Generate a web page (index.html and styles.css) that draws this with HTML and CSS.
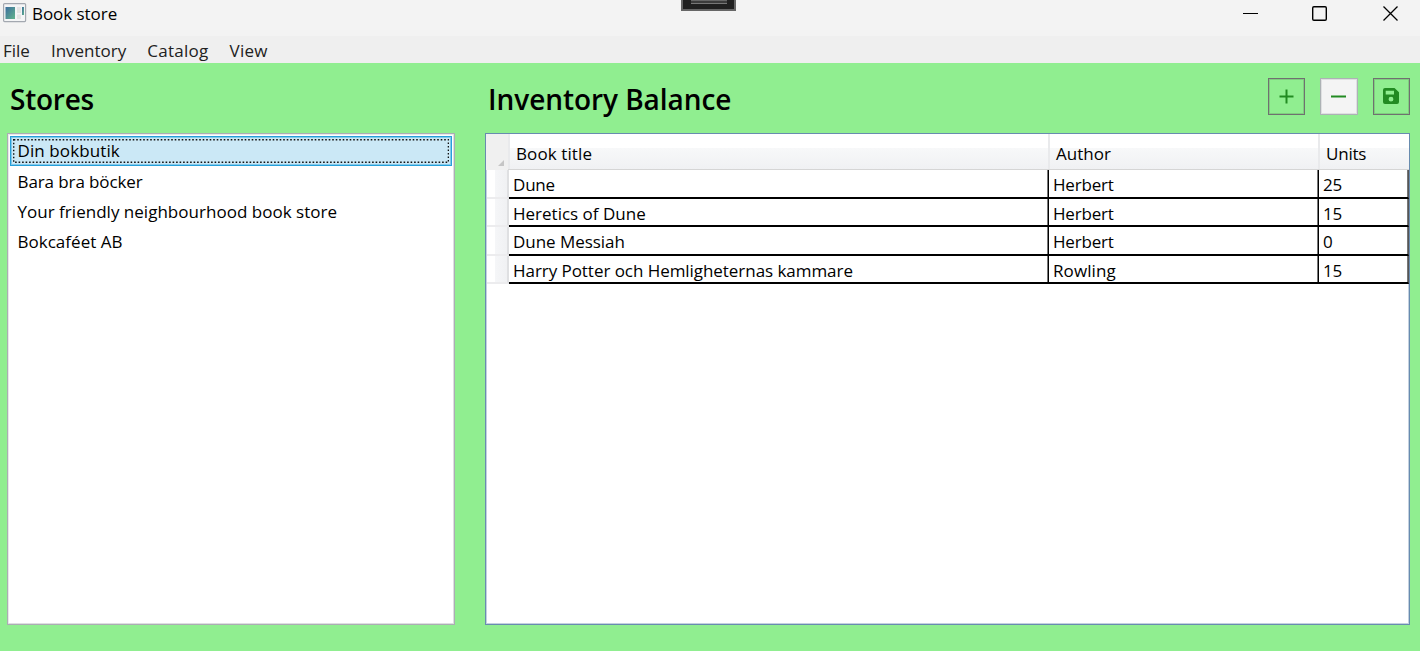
FILE: index.html
```html
<!DOCTYPE html>
<html lang="en">
<head>
<meta charset="utf-8">
<title>Book store</title>
<link rel="stylesheet" href="styles.css">
</head>
<body>
<div class="window">
  <header class="titlebar">
    <svg class="app-icon" width="24" height="20" viewBox="0 0 24 20">
      <defs><linearGradient id="pane" x1="0" y1="0" x2="1" y2="1"><stop offset="0" stop-color="#3c6e9e"/><stop offset="1" stop-color="#62b48c"/></linearGradient></defs>
      <rect x=".6" y=".6" width="22" height="18" rx="1" fill="#f4f5f6" stroke="#a3a8b0" stroke-width="1.2"/>
      <rect x="2.500" y="4" width="9.500" height="12" fill="url(#pane)"/>
      <rect x="14" y="4" width="4" height="6" fill="#e4e4e4"/>
      <rect x="14" y="11.500" width="4" height="4.500" fill="#e4e4e4"/>
      <rect x="19" y="4" width="2" height="8" fill="url(#pane)"/>
    </svg>
    <span class="title">Book store</span>
    <div class="debug-tab"><span></span></div>
    <svg class="controls" width="177" height="24" viewBox="-7 0 177 24" fill="none" stroke="#000">
      <path d="M-7 13.500H8"/>
      <rect x="62.700" y="6.700" width="13.600" height="13.600" rx="1.200" stroke-width="1.400"/>
      <path d="M133.500 6.500L147.500 20.500M147.500 6.500L133.500 20.500" stroke-width="1.300"/>
    </svg>
  </header>
  <nav class="menu"><span>File</span><span>Inventory</span><span class="m-catalog">Catalog</span><span class="m-view">View</span></nav>
  <main class="content">
    <section class="stores">
      <div class="heading"><h1 class="h-stores">Stores</h1></div>
      <ul class="list">
        <li class="selected"><span class="s1">Din bokbutik</span><svg class="focus" width="436" height="24" viewBox="0 0 436 24"><rect x=".7" y=".7" width="434.700" height="22.600"/></svg></li>
        <li><span class="s2">Bara bra böcker</span></li>
        <li><span class="s3">Your friendly neighbourhood book store</span></li>
        <li><span class="s3">Bokcaféet AB</span></li>
      </ul>
    </section>
    <section class="inventory">
      <div class="heading">
        <h1 class="h-inventory">Inventory Balance</h1>
        <div class="actions">
          <button class="tool" aria-label="Add"><svg width="15" height="15" viewBox="0 0 15 15"><path d="M7.500 .5V14.500M.5 7.500H14.500" stroke="#228b22" stroke-width="2"/></svg></button>
          <button class="tool disabled" aria-label="Remove"><svg width="15" height="15" viewBox="0 0 15 15"><path d="M0 7.500H15" stroke="#228b22" stroke-width="2"/></svg></button>
          <button class="tool" aria-label="Save"><svg width="16" height="16" viewBox="0 0 16 16"><path fill="#228b22" fill-rule="evenodd" d="M2 0H11.500L16 4.300V14Q16 16 14 16H2Q0 16 0 14V2Q0 0 2 0ZM2.700 2.700V6.500H11V2.700ZM8 8.800A2.400 2.400 0 1 0 8 13.600A2.400 2.400 0 1 0 8 8.800Z"/></svg></button>
        </div>
      </div>
      <div class="grid">
        <div class="row head"><div class="corner"><svg width="6" height="6"><path d="M6 0V6H0Z" fill="#c5c5c5"/></svg></div><div class="th"><span class="t-title">Book title</span></div><div class="th"><span class="t-author">Author</span></div><div class="th"><span>Units</span></div></div>
        <div class="row"><div class="rh"></div><div class="td"><span>Dune</span></div><div class="td"><span>Herbert</span></div><div class="td last"><span>25</span></div></div>
        <div class="row"><div class="rh"></div><div class="td"><span class="b2">Heretics of Dune</span></div><div class="td"><span>Herbert</span></div><div class="td last"><span>15</span></div></div>
        <div class="row tall"><div class="rh"></div><div class="td"><span class="b4">Dune Messiah</span></div><div class="td"><span>Herbert</span></div><div class="td last"><span>0</span></div></div>
        <div class="row"><div class="rh"></div><div class="td"><span class="b4">Harry Potter och Hemligheternas kammare</span></div><div class="td"><span class="rowling">Rowling</span></div><div class="td last"><span>15</span></div></div>
      </div>
    </section>
  </main>
</div>
</body>
</html>
```
FILE: styles.css
```css
* { box-sizing: border-box; }
body { margin: 0; font-family: "Open Sans", "Noto Sans", sans-serif; font-size: 17px; color: #000; letter-spacing: -0.2px; }
.window { width: 1420px; height: 651px; display: flex; flex-direction: column; background: #90ee90; overflow: hidden; position: relative; }
.titlebar { height: 36px; background: #f3f3f3; display: flex; align-items: flex-start; padding-left: 3px; }
.app-icon { margin-top: 3px; flex: none; }
.title { margin-left: 5px; line-height: 27px; white-space: nowrap; letter-spacing: -0.05px; }
.debug-tab { position: absolute; left: 681px; top: 0; width: 55px; height: 11px; background: #202020; border: 2px solid #666; border-top: 0; }
.debug-tab span { display: block; width: 36px; height: 4px; margin: 0 auto; background: #3c3c3c; border-top: 1px solid #666; border-bottom: 1px solid #777; }
.controls { margin-left: auto; flex: none; }
.menu { height: 27px; background: #efefef; display: flex; gap: 21px; padding-left: 3px; line-height: 29px; color: #212121; white-space: nowrap; letter-spacing: 0; }
.m-catalog { letter-spacing: 0.25px; }
.m-view { letter-spacing: 0.3px; }
.content { flex: 1; display: flex; gap: 30px; padding: 0 10px 26px 7px; }
.stores { width: 448px; display: flex; flex-direction: column; }
.inventory { flex: 1; display: flex; flex-direction: column; }
.heading { height: 70px; display: flex; justify-content: space-between; padding-left: 3px; }
h1 { margin: 0; font-size: 28px; font-weight: 600; line-height: 73px; white-space: nowrap; letter-spacing: -0.05px; }
.h-stores { letter-spacing: -0.25px; }
.actions { display: flex; gap: 15px; padding-top: 15px; }
.tool { width: 37px; height: 37px; padding: 0 1px 1px 0; border: 1px solid #707070; box-shadow: inset 0 0 0 1px #7fce7f; background: transparent; display: grid; place-items: center; }
.tool.disabled { width: 38px; background: #f4f4f4; border-color: #adb2b5; box-shadow: inset 0 0 0 1px #dfe0e1; }
.list { list-style: none; flex: 1; margin: 0; padding: 2px; background: #fff; border: 1px solid #abadb3; box-shadow: inset -1px -1px #dddee0, inset 1px 1px #e8e8ea; }
li { height: 30px; line-height: 31px; padding-left: 7.5px; white-space: nowrap; position: relative; }
.selected { background: #cbe8f6; border: 1px solid #26a0da; box-shadow: inset 0 0 0 1px #83c8e9; line-height: 28px; padding-left: 6.5px; }
.s1 { letter-spacing: 0.1px; }
.s2 { letter-spacing: -0.1px; }
.s3 { letter-spacing: 0.02px; }
.focus { position: absolute; left: 2px; top: 2px; fill: none; stroke: #111; stroke-width: 1.4; stroke-dasharray: 1.6 1.9; }
.grid { flex: 1; background: #fff; border: 1px solid #688caf; box-shadow: inset -1px -1px #c3d1df, inset 1px 1px #c3d1df; }
.row { display: grid; grid-template-columns: 23px 540px 270px 90px; grid-template-rows: 100%; height: 28.5px; }
.row.head { height: 36px; }
.row { height: 28px; }
.row.head + .row, .row.tall { height: 29px; }
.corner { background: #f0f0f0; display: flex; align-items: flex-end; justify-content: flex-end; padding: 0 5px 4px 0; }
.th { background: linear-gradient(#fff 0, #fff 40%, #f7f8f9 41%, #f0f1f3 100%); border-bottom: 1px solid #d5d5d5; box-shadow: inset 2px 0 #e9eaec; margin-left: -1px; line-height: 39px; padding-left: 8px; white-space: nowrap; }
.t-title { letter-spacing: 0.1px; }
.t-author { letter-spacing: 0; }
.rh { background: linear-gradient(90deg, #fff 40%, #f5f6f8 41%, #f0f1f3); border-right: 2px solid #dfe0e2; border-bottom: 2px solid #ececee; margin-left: 1px; }
.td { border-right: 1px solid #000; border-bottom: 2px solid #000; box-shadow: inset -1px 0 #777; padding-left: 4px; line-height: 30px; white-space: nowrap; }
.td.last { border-right-color: #555; }
.b2 { letter-spacing: 0; }
.b4 { letter-spacing: -0.05px; }
.rowling { letter-spacing: 0.1px; }
```
